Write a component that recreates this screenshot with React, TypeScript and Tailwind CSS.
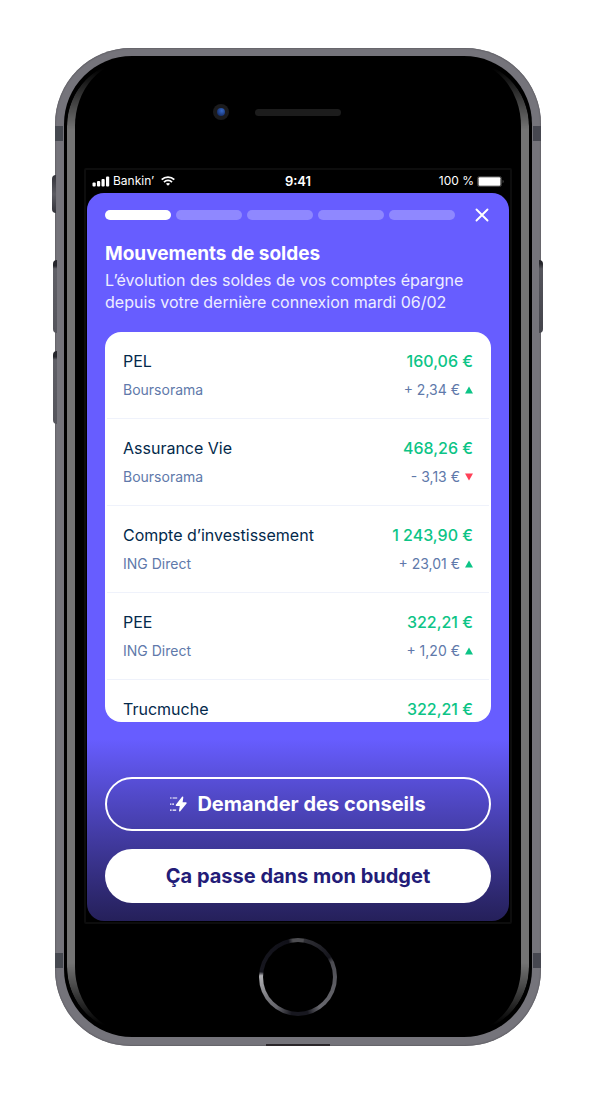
type Account = {
  name: string;
  balance: string;
  bank?: string;
  change?: string;
  up?: boolean;
};

const accounts: Account[] = [
  { name: "PEL", bank: "Boursorama", balance: "160,06 €", change: "+ 2,34 €", up: true },
  { name: "Assurance Vie", bank: "Boursorama", balance: "468,26 €", change: "- 3,13 €", up: false },
  { name: "Compte d’investissement", bank: "ING Direct", balance: "1 243,90 €", change: "+ 23,01 €", up: true },
  { name: "PEE", bank: "ING Direct", balance: "322,21 €", change: "+ 1,20 €", up: true },
  { name: "Trucmuche", balance: "322,21 €" },
];

function Trend({ up }: { up?: boolean }) {
  return (
    <svg viewBox="0 0 8 8" className="size-2" aria-hidden="true">
      {up ? <path d="M4 .6 8 7.400H0z" fill="#0cc486" /> : <path d="M0 .6h8L4 7.400z" fill="#ff4057" />}
    </svg>
  );
}

function AccountRow({ account }: { account: Account }) {
  return (
    <li className="mx-0.5 flex flex-col gap-[7px] border-b border-[#eff2fb] px-4 pb-[18px] pt-[17px] last:border-b-0 last:pb-0">
      <div className="flex justify-between text-base leading-6">
        <span className="text-[#03294b]">{account.name}</span>
        <span className="font-medium text-[#0cc486]">{account.balance}</span>
      </div>
      {account.bank && (
        <div className="flex justify-between text-sm leading-5 text-[#6079aa]">
          <span>{account.bank}</span>
          <span className="flex items-center gap-[5px]">
            {account.change}
            <Trend up={account.up} />
          </span>
        </div>
      )}
    </li>
  );
}

function StatusBar() {
  return (
    <div className="grid h-[23px] grid-cols-3 items-center px-[5px] pb-px text-xs leading-4 text-white">
      <div className="flex items-center gap-[3px]">
        <svg viewBox="0 0 18 11" className="h-[11px] w-[18px]" fill="white" aria-hidden="true">
          <rect x="0.5" y="6.5" width="3.2" height="4" rx="1" />
          <rect x="5" y="5" width="3.2" height="5.5" rx="1" />
          <rect x="9.5" y="3" width="3.2" height="7.5" rx="1" />
          <rect x="14" y="0.5" width="3.2" height="10" rx="1" />
        </svg>
        <span>Bankin’</span>
        <svg viewBox="0 0 14 10" className="ml-1 h-[10px] w-[14px]" fill="none" stroke="white" strokeWidth="1.8" aria-hidden="true">
          <path d="M.7 3.700C4.200.200 9.800.200 13.300 3.700" />
          <path d="M3 6.100c2.200-2.200 5.800-2.200 8 0" />
          <path d="M7 9.800 4.900 7.700c1.200-1.100 3-1.100 4.200 0z" fill="white" stroke="none" />
        </svg>
      </div>
      <span className="text-center text-[13px] font-semibold">9:41</span>
      <div className="flex items-center justify-end gap-[3px]">
        <span>100 %</span>
        <svg viewBox="0 0 27 11" className="h-[11px] w-[27px]" aria-hidden="true">
          <rect x="0.5" y="0.5" width="24" height="10" rx="2" fill="none" stroke="#3c3c3c" />
          <rect x="1.5" y="1.2" width="22" height="8.600" rx="1" fill="white" />
          <path d="M25.600 4v3c.8-.3 1.100-.8 1.100-1.500S26.400 4.300 25.600 4z" fill="#4a4a4a" />
        </svg>
      </div>
    </div>
  );
}

function StoryHeader() {
  return (
    <div className="flex h-[10px] items-center gap-5">
      <div className="flex flex-1 gap-[5px]" role="img" aria-label="1 / 5">
        <span className="h-[10px] flex-1 rounded-full bg-white" />
        <span className="h-[10px] flex-1 rounded-full bg-[#8f88ff]" />
        <span className="h-[10px] flex-1 rounded-full bg-[#8f88ff]" />
        <span className="h-[10px] flex-1 rounded-full bg-[#8f88ff]" />
        <span className="h-[10px] flex-1 rounded-full bg-[#8f88ff]" />
      </div>
      <button type="button" aria-label="Fermer" className="mr-0.5 size-[14px]">
        <svg viewBox="0 0 14 14" className="size-[14px]" stroke="white" strokeWidth="1.900" strokeLinecap="round">
          <path d="M1.500 1.500l11 11M12.500 1.500l-11 11" />
        </svg>
      </button>
    </div>
  );
}

function Screen() {
  return (
    <section className="rounded-[17px] bg-linear-to-b from-[#675dff] from-75% to-[#25205a] px-[18px] pb-[18px] pt-[17px]">
      <StoryHeader />
      <h1 className="mt-[22px] text-[19px] font-bold leading-6 text-white">Mouvements de soldes</h1>
      <p className="mt-[3px] text-base leading-[22px] text-[#eeedff]">
        L’évolution des soldes de vos comptes épargne depuis votre dernière connexion mardi 06/02
      </p>
      <ul className="mt-[19px] h-[390px] overflow-y-auto rounded-2xl bg-white [scrollbar-width:none]">
        {accounts.map((account) => (
          <AccountRow key={account.name} account={account} />
        ))}
      </ul>
      <div className="mt-[55px] flex flex-col gap-[18px] text-xl font-bold">
        <button
          type="button"
          className="flex h-[54px] items-center justify-center gap-[10px] rounded-full border-2 border-white text-white"
        >
          <svg viewBox="0 0 17 16" className="h-4 w-[17px]" aria-hidden="true">
            <path
              d="M0 2h1.600M2.600 2h4.600M0 8.200h1.400M2.200 8.200h1.800M0 14.200h1.600M2.600 14.200h3.600"
              stroke="white"
              strokeWidth="1.200"
            />
            <path
              d="M12.600 1.300 6.400 9.200h4.200l-.9 5.600L16 7h-4.200z"
              fill="white"
              stroke="white"
              strokeWidth="1.400"
              strokeLinejoin="round"
            />
          </svg>
          Demander des conseils
        </button>
        <button type="button" className="h-[54px] rounded-full bg-white text-[#231c78]">
          Ça passe dans mon budget
        </button>
      </div>
    </section>
  );
}

function PhoneEdges() {
  return (
    <div aria-hidden="true">
      <span className="absolute -left-[3px] top-[127px] h-[38px] w-1 rounded-l-sm bg-linear-to-b from-[#33333a] via-[#5b5b62] to-[#33333a]" />
      <span className="absolute -left-[2px] top-[212px] h-[73px] w-1 rounded-l-sm bg-linear-to-b from-[#25252b] from-8% via-[#606067] via-12% to-[#55555c]" />
      <span className="absolute -left-[2px] top-[303px] h-[73px] w-1 rounded-l-sm bg-linear-to-b from-[#25252b] from-8% via-[#606067] via-12% to-[#55555c]" />
      <span className="absolute -right-[2px] top-[212px] h-[73px] w-1 rounded-r-sm bg-linear-to-b from-[#25252b] from-5% via-[#55555c] via-12% to-[#44444b]" />
      <span className="absolute left-0 top-[78px] h-[15px] w-2 bg-[#464950]" />
      <span className="absolute right-0 top-[78px] h-[15px] w-2 bg-[#464750]" />
      <span className="absolute bottom-[78px] left-0 h-[15px] w-2 bg-[#464950]" />
      <span className="absolute bottom-[78px] right-0 h-[15px] w-2 bg-[#464750]" />
      <span className="absolute bottom-0 left-1/2 h-0.5 w-16 -translate-x-1/2 bg-[#2b272b]" />
    </div>
  );
}

export default function App() {
  return (
    <main className="min-h-screen bg-white pb-[54px] pl-[55px] pr-[59px] pt-12 font-['Inter','Liberation_Sans',sans-serif]">
      <div className="relative mx-auto max-w-[486px] rounded-[76px] bg-[#75747b] px-[9px] pb-[9px] pt-2 shadow-[inset_0_0_1px_1px_#66656b]">
        <PhoneEdges />
        <div className="relative rounded-[68px] bg-black px-[11px]">
          <div
            aria-hidden="true"
            className="absolute inset-x-[3px] inset-y-1 rounded-[66px] border-x-8 border-[#747474] mask-[linear-gradient(transparent_8px,black_70px,black_calc(100%-70px),transparent_calc(100%-8px))]"
          />
          <div className="grid h-[112px] grid-cols-[1fr_86px_1fr] items-center">
            <span className="mr-[26px] flex size-4 items-center justify-center justify-self-end rounded-full bg-[#1b1b1d]">
              <span className="size-2 rounded-full bg-radial-[at_60%_35%] from-[#3568c8] to-[#0b1a48]" />
            </span>
            <span className="h-[7px] rounded-full bg-[#1c1c1c]" />
          </div>
          <div className="mx-[9px] rounded-xs border-2 border-[#0d0d0d] px-px pb-px">
            <StatusBar />
            <Screen />
          </div>
          <div className="flex h-[113px] justify-center pt-[14px]">
            <button
              type="button"
              aria-label="Accueil"
              className="size-[78px] rounded-full bg-[conic-gradient(#4c4c50_0deg,#4c4c50_8deg,#303036_10deg,#15151c_58deg,#4a4a50_66deg,#5c5c62_100deg,#66666c_145deg,#17171f_165deg,#17171f_190deg,#66666c_215deg,#77777c_235deg,#b0b0b4_272deg,#17171f_278deg,#101018_345deg,#4c4c50_352deg)] p-1"
            >
              <span className="block size-full rounded-full bg-black" />
            </button>
          </div>
        </div>
      </div>
    </main>
  );
}
